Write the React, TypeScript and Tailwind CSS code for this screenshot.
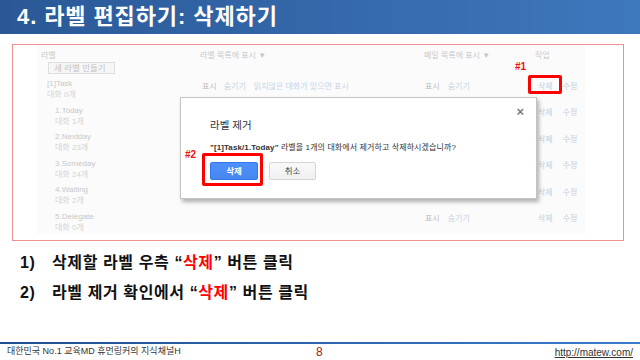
import React from "react";

const F = { fontFamily: '"Liberation Sans", "Noto Sans CJK KR", sans-serif' };

type Row = { name: string; count: string; indent: number; col2?: boolean; col3: boolean };

const rows: Row[] = [
  { name: "[1]Task", count: "대화 0개", indent: 6, col2: true, col3: true },
  { name: "1.Today", count: "대화 1개", indent: 14, col3: true },
  { name: "2.Nextday", count: "대화 23개", indent: 14, col3: true },
  { name: "3.Someday", count: "대화 24개", indent: 14, col3: true },
  { name: "4.Waiting", count: "대화 2개", indent: 14, col3: true },
  { name: "5.Delegate", count: "대화 0개", indent: 14, col3: true },
];

export default function App() {
  return (
    <div className="w-[640px] h-[360px] bg-white flex flex-col overflow-hidden" style={F}>
      {/* Title bar */}
      <div className="h-[34px] shrink-0 flex items-center pl-[17px] bg-[linear-gradient(90deg,#2a5897,#3e78bc)]">
        <span className="text-white font-bold text-[22px] leading-none tracking-[0.9px]">4. 라벨 편집하기: 삭제하기</span>
      </div>

      {/* Screenshot frame */}
      <div className="mt-[10px] ml-[12px] w-[612px] h-[197px] shrink-0 border border-[#f29090] relative">
        <div className="ml-[24px] w-[548px] h-[189px] bg-[#fbfbfb] pl-[4px] pt-[5px] flex flex-col text-[8px] text-[#c8c8c8]">
          {/* header */}
          <div className="flex h-[11px] leading-[11px]">
            <div className="w-[159px]">라벨</div>
            <div className="w-[224px]">라벨 목록에 표시 ▼</div>
            <div className="w-[111px]">메일 목록에 표시 ▼</div>
            <div>작업</div>
          </div>
          <div className="mt-[1px] ml-[7px] w-[67px] h-[12px] border border-[#dedede] bg-[#f7f7f7] flex items-center pl-[5px] text-[8.5px] text-[#c2c2c2]">
            새 라벨 만들기
          </div>
          <div className="mt-[4px] flex flex-col">
            {rows.map((r) => (
              <div key={r.name} className="flex h-[26.6px]">
                <div className="w-[159px] flex flex-col leading-[11px]" style={{ paddingLeft: r.indent }}>
                  <span>{r.name}</span>
                  <span className="text-[#d4d4d4]">{r.count}</span>
                </div>
                <div className="w-[224px] pt-[2.5px] leading-[11px] flex pl-[2px]">
                  {r.col2 && (
                    <>
                      <span className="text-[#bdbdbd]">표시</span>
                      <span className="ml-[7px] text-[#c6d3e6]">숨기기</span>
                      <span className="ml-[8px] text-[#c6d3e6]">읽지않은 대화가 있으면 표시</span>
                    </>
                  )}
                </div>
                <div className="w-[111px] pt-[2.5px] leading-[11px] flex pl-[1px]">
                  {r.col3 && (
                    <>
                      <span className="text-[#bdbdbd]">표시</span>
                      <span className="ml-[8px] text-[#c6d3e6]">숨기기</span>
                    </>
                  )}
                </div>
                <div className="pt-[2.5px] leading-[11px] flex pl-[3px] text-[#c6cedc]">
                  <span>삭제</span>
                  <span className="ml-[10px]">수정</span>
                </div>
              </div>
            ))}
          </div>
        </div>

        {/* Dialog */}
        <div className="absolute left-[167px] top-[52px] w-[357px] h-[102px] bg-white border border-[#c4c4c4] shadow-[2px_3px_4px_rgba(0,0,0,0.3)] flex flex-col pl-[29px] pt-[20px]">
          <span className="absolute right-[12px] top-[7px] text-[13px] leading-[13px] text-[#7a7a7a] font-bold">×</span>
          <div className="h-[14px] leading-[14px] text-[10.5px] text-[#333]">라벨 제거</div>
          <div className="mt-[10px] h-[12px] leading-[12px] text-[8px] text-[#333] whitespace-nowrap tracking-[0.1px]">
            <span className="font-bold">"[1]Task/1.Today"</span> 라벨을 1개의 대화에서 제거하고 삭제하시겠습니까?
          </div>
          <div className="mt-[8px] flex gap-[11px]">
            <div className="w-[48px] h-[18px] rounded-[2px] border border-[#3079ed] bg-[linear-gradient(#4d90fe,#4787ed)] flex items-center justify-center text-white font-bold text-[8.5px]">
              삭제
            </div>
            <div className="w-[47px] h-[18px] rounded-[2px] border border-[#d6d6d6] bg-[linear-gradient(#f8f8f8,#f0f0f0)] flex items-center justify-center text-[#444] text-[8.5px]">
              취소
            </div>
          </div>
        </div>

        {/* annotations */}
        <span className="absolute left-[502px] top-[16px] text-[10px] leading-[12px] font-bold text-[#ee1111]">#1</span>
        <div className="absolute left-[515px] top-[30px] w-[34px] h-[19px] border-[3px] border-[#ff0000] rounded-[2px]" />
        <span className="absolute left-[172px] top-[104px] text-[10px] leading-[12px] font-bold text-[#ee1111]">#2</span>
        <div className="absolute left-[189px] top-[108px] w-[61px] h-[33px] border-[3px] border-[#ff0000] rounded-[2px]" />
      </div>

      {/* Bullets */}
      <div className="mt-[7px] flex flex-col text-[16px] font-bold text-[#111] tracking-[0.6px]">
        <div className="h-[30px] flex items-center">
          <span className="w-[52px] pl-[20px]">1)</span>
          <span>
            삭제할 라벨 우측 “<span className="text-[#ff0000]">삭제</span>” 버튼 클릭
          </span>
        </div>
        <div className="h-[30px] flex items-center">
          <span className="w-[52px] pl-[20px]">2)</span>
          <span>
            라벨 제거 확인에서 “<span className="text-[#ff0000]">삭제</span>” 버튼 클릭
          </span>
        </div>
      </div>

      {/* Footer */}
      <div className="mt-auto flex flex-col">
        <div className="h-[2px] bg-[linear-gradient(90deg,#1f4f8f,#3a7ccc)]" />
        <div className="h-[16px] flex items-center px-[7px] relative">
          <span className="text-[9px] text-[#333]">대한민국 No.1 교육MD 휴먼링커의 지식채널H</span>
          <span className="absolute left-[316px] text-[12px] text-[#a02020]">8</span>
          <span className="ml-auto text-[10px] text-[#333] underline">http://matew.com/</span>
        </div>
      </div>
    </div>
  );
}
